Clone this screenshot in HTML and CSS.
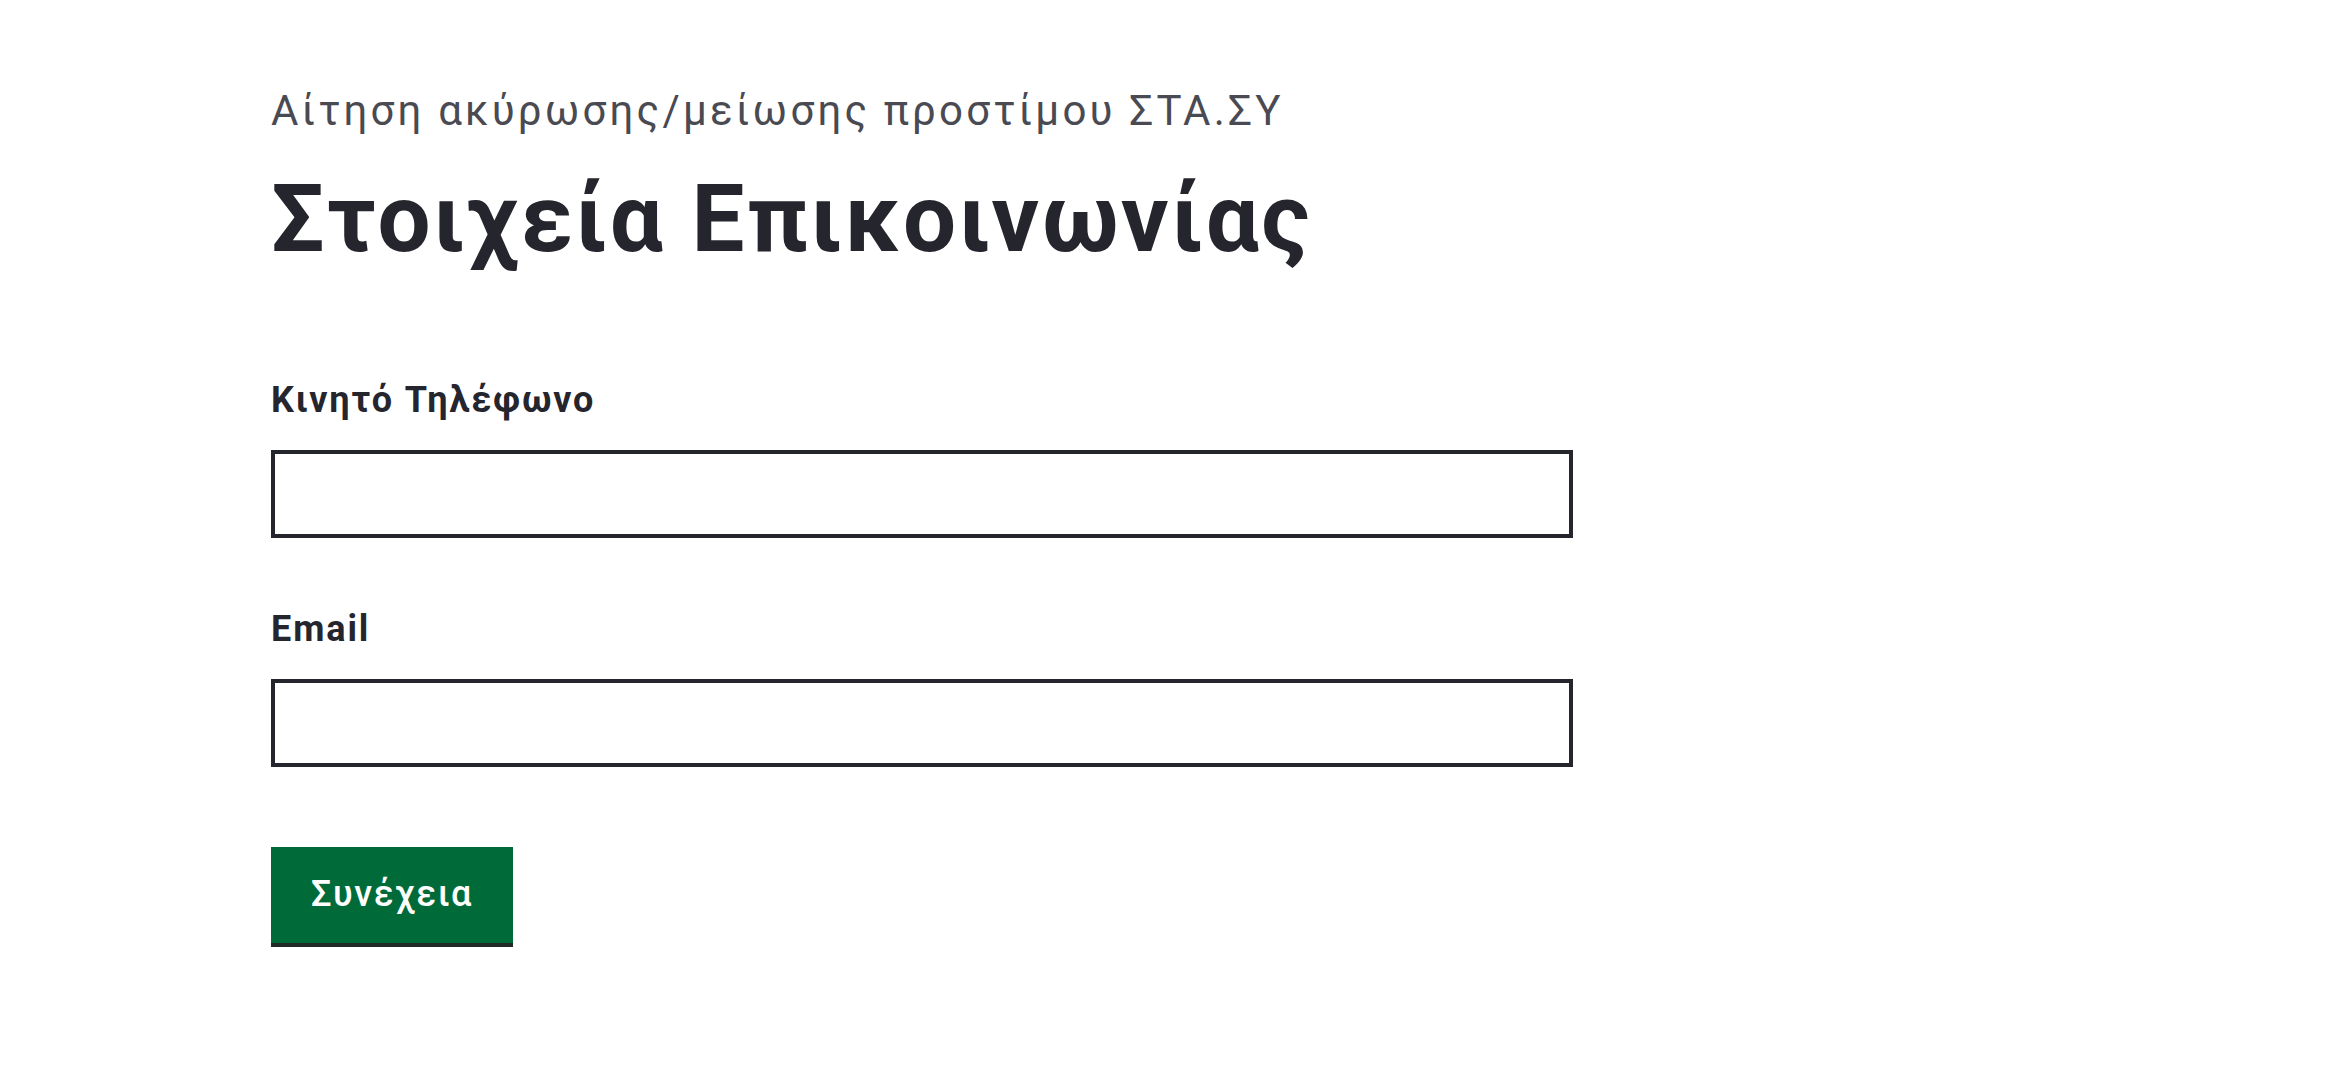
FILE: index.html
```html
<!DOCTYPE html>
<html lang="el">
<head>
<meta charset="utf-8">
<title>Στοιχεία Επικοινωνίας</title>
<link rel="stylesheet" href="styles.css">
</head>
<body>
<main class="page">
  <form class="form">
    <span class="caption">Αίτηση ακύρωσης/μείωσης προστίμου ΣΤΑ.ΣΥ</span>
    <h1 class="title">Στοιχεία Επικοινωνίας</h1>
    <div class="field">
      <label class="label" for="phone">Κινητό Τηλέφωνο</label>
      <input class="input" id="phone" type="tel">
    </div>
    <div class="field">
      <label class="label" for="email">Email</label>
      <input class="input" id="email" type="email">
    </div>
    <button class="button" type="button">Συνέχεια</button>
  </form>
</main>
</body>
</html>
```
FILE: styles.css
```css
html, body {
  margin: 0;
  padding: 0;
  background: #ffffff;
}
body {
  font-family: Roboto, "Noto Sans", "Liberation Sans", sans-serif;
  color: #25252d;
}
.page {
  padding: 85px 0 0 271px;
}
.form {
  display: flex;
  flex-direction: column;
  align-items: flex-start;
  width: 1302px;
}
.caption {
  display: block;
  font-size: 42px;
  line-height: 52.5px;
  font-weight: 400;
  letter-spacing: 3.2px;
  color: #4a4a52;
}
.title {
  margin: 30px 0 0 0;
  font-size: 94px;
  line-height: 103.4px;
  font-weight: 700;
  letter-spacing: 2.7px;
  color: #25252d;
}
.field {
  display: flex;
  flex-direction: column;
  align-items: flex-start;
  width: 100%;
  margin-top: 107px;
}
.field + .field {
  margin-top: 69px;
}
.label {
  font-size: 36px;
  line-height: 45px;
  font-weight: 700;
  letter-spacing: 1.9px;
}
.input {
  margin-top: 27px;
  box-sizing: border-box;
  width: 100%;
  height: 88px;
  border: 4px solid #25252d;
  border-radius: 0;
  background: #ffffff;
  padding: 0 16px;
  font: inherit;
  font-size: 36px;
  outline: none;
}
.button {
  margin-top: 80px;
  border: 0;
  border-bottom: 4px solid #1f2a24;
  border-radius: 0;
  background: #006b39;
  color: #ffffff;
  font-family: Roboto, "Noto Sans", "Liberation Sans", sans-serif;
  font-size: 36px;
  line-height: 45px;
  font-weight: 500;
  letter-spacing: 1.6px;
  padding: 25.5px 40px;
  cursor: pointer;
}
```
